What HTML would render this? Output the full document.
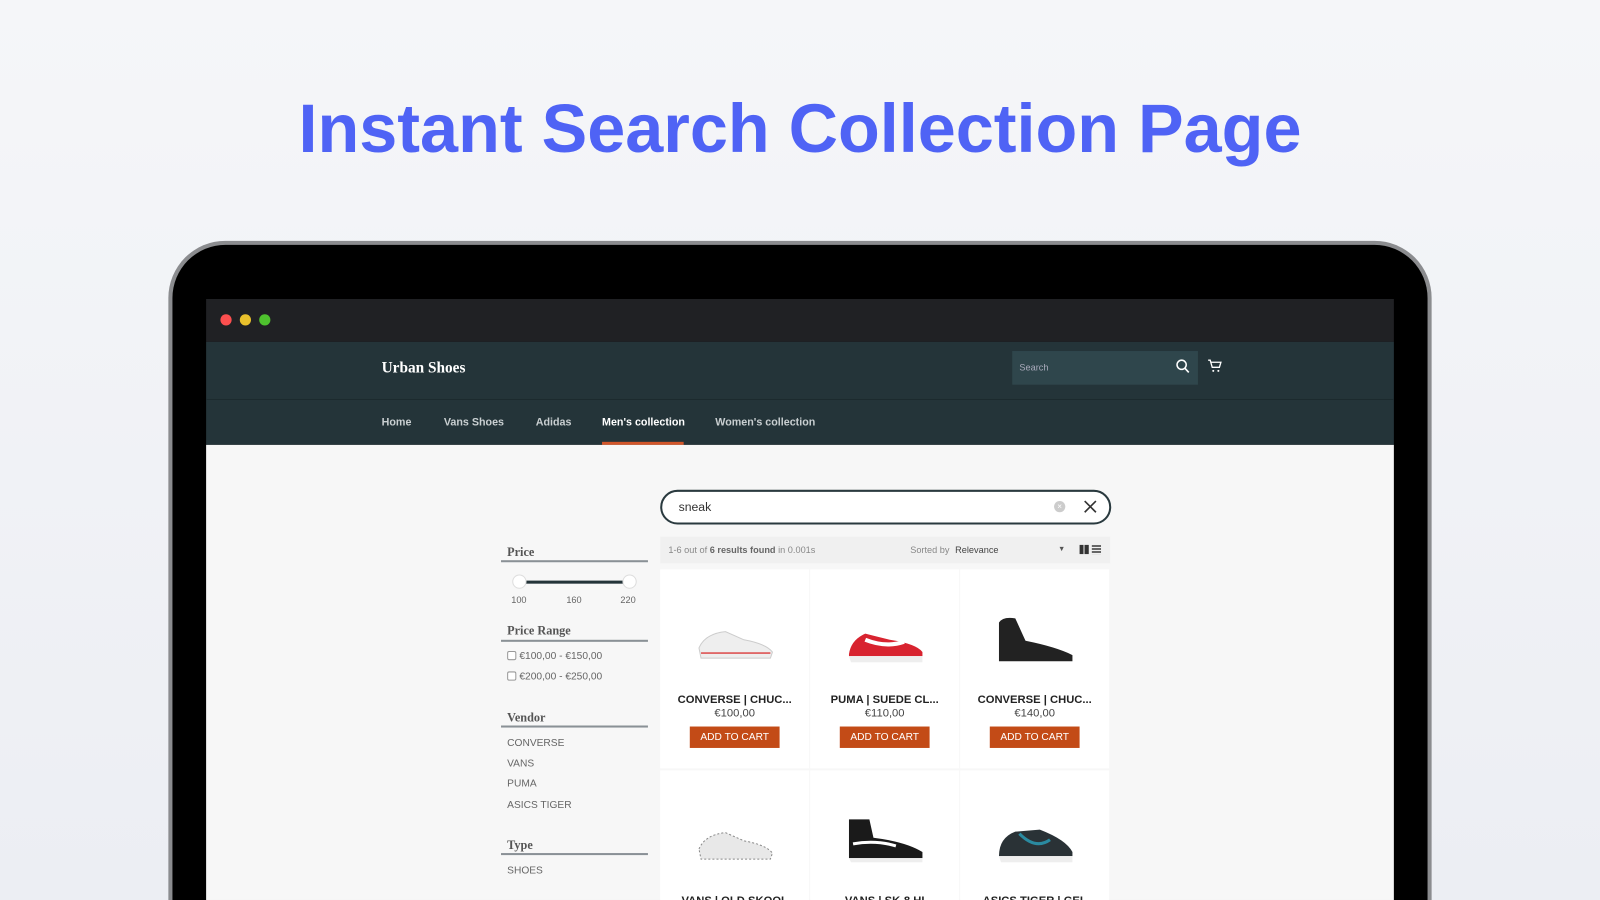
<!DOCTYPE html>
<html style="overflow:hidden;width:1600px;height:900px"><head><meta charset="utf-8"><style>
*{margin:0;padding:0;box-sizing:border-box}
html,body{width:1600px;height:900px;overflow:hidden}
body{background:linear-gradient(#f5f6f9,#eceef3);font-family:"Liberation Sans",sans-serif;position:relative}
#w{position:absolute;left:0;top:0;width:1568px;height:882px;transform:scale(1.0204);transform-origin:0 0;overflow:hidden}
.a{position:absolute}
h1{position:absolute;left:0;width:1568px;top:88px;text-align:center;font-size:67px;font-weight:bold;color:#4f63f5;font-family:"Liberation Sans",sans-serif}
.serif{font-family:"Liberation Serif",serif}
.nav span{position:absolute;top:408px;font-size:10.5px;font-weight:bold;color:#c9cfd1}
.ft{font-family:"Liberation Serif",serif;font-weight:bold;font-size:12px;color:#555;position:absolute;left:497px}
.fl{position:absolute;left:491px;width:144px;height:2px;background:#8a9196}
.fi{position:absolute;left:497px;font-size:10px;color:#666}
.card{position:absolute;background:#fff;width:146px;height:195px;overflow:hidden}
.nm{position:absolute;top:122px;width:100%;text-align:center;font-size:11px;font-weight:bold;color:#222}
.pr{position:absolute;top:135px;width:100%;text-align:center;font-size:11px;color:#444}
.bt{position:absolute;top:154px;left:29px;width:88px;height:21px;background:#c34b17;color:#fff;font-size:10px;text-align:center;line-height:21px}
.cb{display:inline-block;width:9px;height:9px;border:1px solid #999;border-radius:2px;vertical-align:-1px;margin-right:3px;background:#fff}
</style></head><body><div id="w">
<h1>Instant Search Collection Page</h1>
<div class="a" style="left:165px;top:236px;width:1238px;height:646px;border-radius:56px 56px 0 0;background:#8b8c8f"></div>
<div class="a" style="left:169px;top:240px;width:1230px;height:642px;border-radius:52px 52px 0 0;background:#000"></div>
<div class="a" style="left:202px;top:293px;width:1164px;height:42px;background:#202124"></div>
<div class="a" style="left:216px;top:308px;width:11px;height:11px;border-radius:50%;background:#fc4f4f"></div>
<div class="a" style="left:235px;top:308px;width:11px;height:11px;border-radius:50%;background:#e8c02c"></div>
<div class="a" style="left:254px;top:308px;width:11px;height:11px;border-radius:50%;background:#4ec22e"></div>
<div class="a" style="left:202px;top:335px;width:1164px;height:101px;background:#243439"></div>
<div class="a" style="left:202px;top:391px;width:1164px;height:1px;background:#1d2b2f"></div>
<div class="a serif" style="left:374px;top:353px;font-size:15px;font-weight:bold;color:#fff">Urban Shoes</div>
<div class="a" style="left:992px;top:344px;width:182px;height:33px;background:#2f464c"></div>
<div class="a" style="left:999px;top:355px;font-size:9px;color:#aab">Search</div>
<svg class="a" style="left:1151px;top:351px" width="16" height="16" viewBox="0 0 16 16"><circle cx="7" cy="6.5" r="4.5" fill="none" stroke="#fff" stroke-width="1.5"/><path d="M10.3 10 L14 14" stroke="#fff" stroke-width="1.6"/></svg>
<svg class="a" style="left:1183px;top:352px" width="15" height="14" viewBox="0 0 15 14"><path d="M1 1h2l2 7h7l1.5-5H4" fill="none" stroke="#fff" stroke-width="1.3"/><circle cx="6" cy="11.5" r="1" fill="#fff"/><circle cx="11" cy="11.5" r="1" fill="#fff"/></svg>
<div class="nav"><span style="left:374px">Home</span><span style="left:435px">Vans Shoes</span><span style="left:525px">Adidas</span><span style="left:590px;color:#fff">Men's collection</span><span style="left:701px">Women's collection</span></div>
<div class="a" style="left:590px;top:433px;width:80px;height:3px;background:#d2562a"></div>
<div class="a" style="left:202px;top:436px;width:1164px;height:446px;background:#f7f7f7"></div>
<div class="a" style="left:647px;top:480px;width:442px;height:34px;border:2px solid #2a3a3f;border-radius:17px;background:#fff"></div>
<div class="a" style="left:665px;top:490px;font-size:12px;color:#333">sneak</div>
<div class="a" style="left:1033px;top:491px;width:11px;height:11px;border-radius:50%;background:#ccc;color:#fff;font-size:8px;line-height:11px;text-align:center">×</div>
<svg class="a" style="left:1062px;top:490px" width="13" height="13"><path d="M1 1L12 12M12 1L1 12" stroke="#333" stroke-width="1.6"/></svg>
<div class="a" style="left:647px;top:526px;width:441px;height:26px;background:#f0f0f0"></div>
<div class="a" style="left:655px;top:534px;font-size:9px;color:#888">1-6 out of <b style="color:#666">6 results found</b> in 0.001s</div>
<div class="a" style="left:892px;top:534px;font-size:9px;color:#888">Sorted by <span style="color:#444;margin-left:3px">Relevance</span></div>
<div class="a" style="left:1037px;top:535px;font-size:7px;color:#555">▼</div>
<div class="a" style="left:1058px;top:534px;width:9px;height:9px;background:linear-gradient(90deg,#333 4px,transparent 4px,transparent 5px,#333 5px)"></div>
<div class="a" style="left:1070px;top:534px;width:9px;height:9px;background:repeating-linear-gradient(#666 0 2px,transparent 2px 3px)"></div>
<div class="ft" style="top:534px">Price</div><div class="fl" style="top:549px"></div>
<div class="a" style="left:510px;top:569px;width:106px;height:3px;background:#243439"></div>
<div class="a" style="left:502px;top:563px;width:14px;height:14px;border-radius:50%;background:#fff;border:1px solid #ddd"></div>
<div class="a" style="left:610px;top:563px;width:14px;height:14px;border-radius:50%;background:#fff;border:1px solid #ddd"></div>
<div class="fi" style="top:583px;left:501px;font-size:9px">100</div><div class="fi" style="top:583px;left:555px;font-size:9px">160</div><div class="fi" style="top:583px;left:608px;font-size:9px">220</div>
<div class="ft" style="top:611px">Price Range</div><div class="fl" style="top:627px"></div>
<div class="fi" style="top:638px"><span class="cb"></span>€100,00 - €150,00</div>
<div class="fi" style="top:658px"><span class="cb"></span>€200,00 - €250,00</div>
<div class="ft" style="top:696px">Vendor</div><div class="fl" style="top:711px"></div>
<div class="fi" style="top:723px">CONVERSE</div><div class="fi" style="top:743px">VANS</div><div class="fi" style="top:763px">PUMA</div><div class="fi" style="top:784px">ASICS TIGER</div>
<div class="ft" style="top:821px">Type</div><div class="fl" style="top:836px"></div>
<div class="fi" style="top:848px">SHOES</div>
<div class="card" style="left:647px;top:558px"><svg class="a" style="left:34px;top:55px" width="80" height="40"><path d="M4 22 Q10 8 30 6 L48 14 Q70 18 76 26 L74 32 H6 Z" fill="#eee" stroke="#ccc"/><path d="M6 27 H74" stroke="#d55" stroke-width="1.5"/></svg><div class="nm">CONVERSE | CHUC...</div><div class="pr">€100,00</div><div class="bt">ADD TO CART</div></div>
<div class="card" style="left:794px;top:558px"><svg class="a" style="left:34px;top:55px" width="80" height="40"><path d="M4 28 Q6 14 20 8 L44 14 Q70 18 76 26 V30 H4 Z" fill="#d8232f"/><path d="M20 14 Q40 22 58 16" stroke="#fff" stroke-width="4" fill="none"/><path d="M4 30 H76 V36 H6 Z" fill="#eee"/></svg><div class="nm">PUMA | SUEDE CL...</div><div class="pr">€110,00</div><div class="bt">ADD TO CART</div></div>
<div class="card" style="left:941px;top:558px"><svg class="a" style="left:34px;top:44px" width="80" height="52"><path d="M4 42 V8 Q8 2 20 4 L30 26 Q60 32 76 40 V46 H4 Z" fill="#222"/></svg><div class="nm">CONVERSE | CHUC...</div><div class="pr">€140,00</div><div class="bt">ADD TO CART</div></div>
<div class="card" style="left:647px;top:755px;height:127px"><svg class="a" style="left:34px;top:55px" width="80" height="40"><path d="M4 22 Q10 8 30 6 L48 14 Q70 18 76 26 L74 32 H6 Z" fill="#e8e8e8" stroke="#888" stroke-dasharray="2 2"/></svg><div class="nm">VANS | OLD SKOOL</div></div>
<div class="card" style="left:794px;top:755px;height:127px"><svg class="a" style="left:34px;top:42px" width="80" height="52"><path d="M4 44 V6 H24 L28 24 Q60 28 76 38 V44 Z" fill="#1a1a1a"/><path d="M8 30 Q30 26 50 32" stroke="#fff" stroke-width="3" fill="none"/><path d="M4 44 H76 V48 H6 Z" fill="#eee"/></svg><div class="nm">VANS | SK-8 HI</div></div>
<div class="card" style="left:941px;top:755px;height:127px"><svg class="a" style="left:34px;top:50px" width="80" height="44"><path d="M4 34 Q4 16 20 10 L44 8 Q70 18 76 30 V34 Z" fill="#2a3236"/><path d="M24 12 Q40 28 54 18" stroke="#2a8aa0" stroke-width="3" fill="none"/><path d="M4 34 H76 V40 H6 Z" fill="#eee"/></svg><div class="nm">ASICS TIGER | GEL</div></div>
</div></body></html>
